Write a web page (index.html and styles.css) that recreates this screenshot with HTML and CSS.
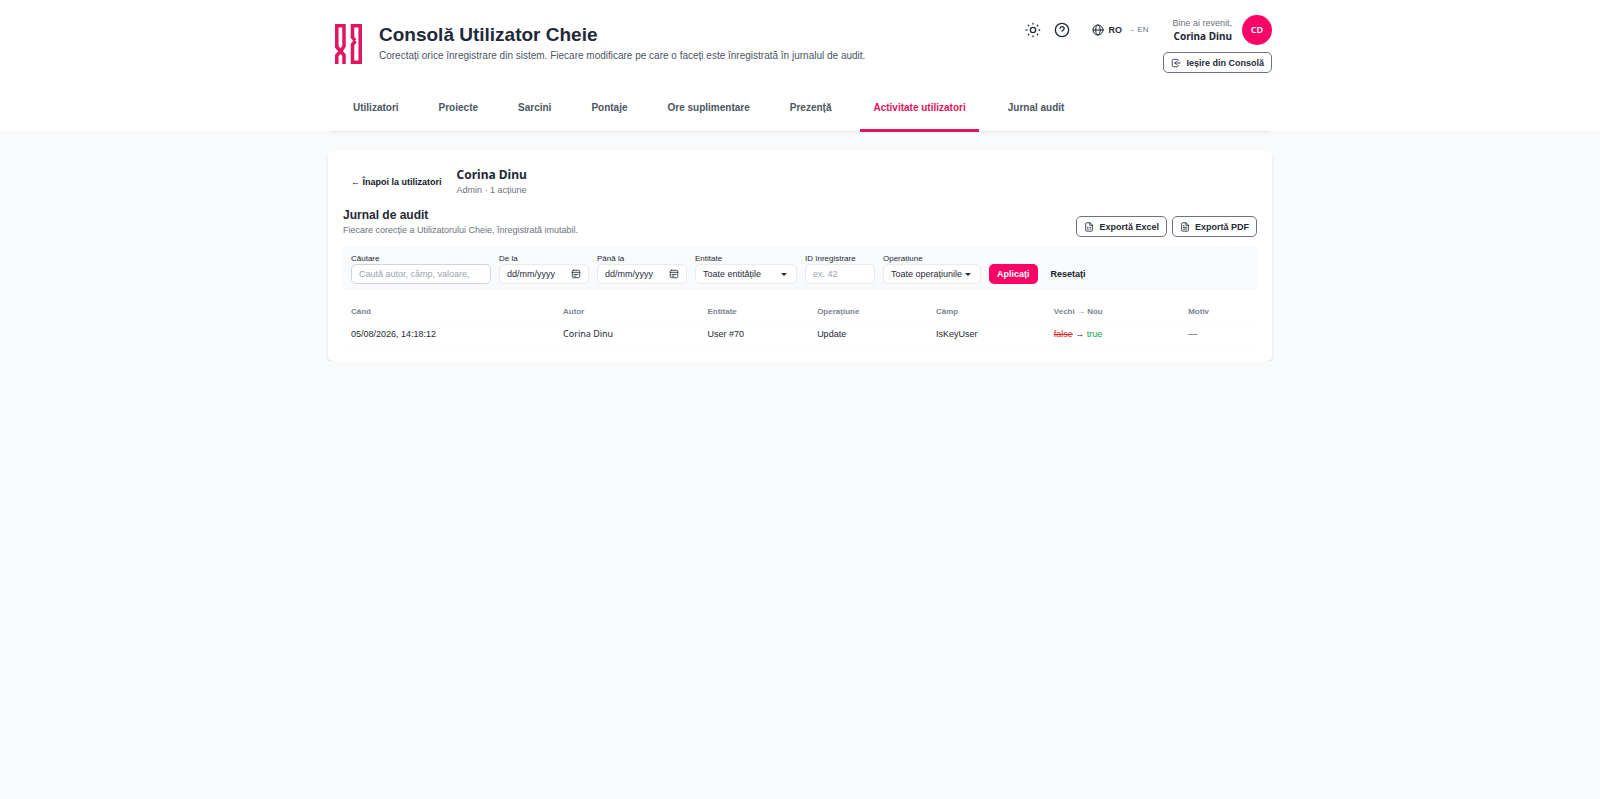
FILE: index.html
```html
<!DOCTYPE html>
<html lang="ro">
  <head>
    <meta charset="UTF-8" />
    <meta name="viewport" content="width=device-width, initial-scale=1" />
    <title>Consolă Utilizator Cheie</title>
    <link rel="stylesheet" href="styles.css">
  </head>
  <body>

  <header class="header">
    <div class="container">
      <div class="topbar">
        <svg class="logo" viewBox="0 0 27 40" aria-hidden="true">
          <path d="M9 23V1.800H1.800V23L9 31v9M9 22.500L6.500 26M4.500 28.500L1.800 31.500V40" />
          <path d="M17.500 13.500V1.800h7.700v36.400h-7.700V20.500l3-3.500M16.500 12l3.500 4.500" />
        </svg>
        <div class="heading">
          <h1>Consolă Utilizator Cheie</h1>
          <p>Corectați orice înregistrare din sistem. Fiecare modificare pe care o faceți este înregistrată în jurnalul de audit.</p>
        </div>
        <div class="tools">
          <div class="tools-row">
            <button type="button" class="icon-button" aria-label="Temă">
              <svg viewBox="0 0 24 24"><circle cx="12" cy="12" r="4" /><path d="M12 2v1M12 21v1M4.900 4.900l.7.7M18.400 18.400l.7.7M2 12h1M21 12h1M5.600 18.400l-.7.7M19.100 4.900l-.7.7" /></svg>
            </button>
            <button type="button" class="icon-button" aria-label="Ajutor">
              <svg viewBox="0 0 24 24"><circle cx="12" cy="12" r="10" /><path d="M9 9.500c.5-1.700 1.700-2.500 3.200-2.500 1.700 0 3 1.200 3 2.800 0 2-2.200 2.400-3.200 3.700" /></svg>
            </button>
            <button type="button" class="lang">
              <svg viewBox="0 0 24 24"><circle cx="12" cy="12" r="10" /><ellipse cx="12" cy="12" rx="4.500" ry="10" /><path d="M2 12h20" /></svg>
              <b>RO</b><span>→ EN</span>
            </button>
            <div class="welcome">
              <span>Bine ai revenit,</span>
              <strong>Corina Dinu</strong>
            </div>
            <div class="avatar">CD</div>
          </div>
          <button type="button" class="button">
            <svg viewBox="0 0 24 24"><path d="M17 7V6a3 3 0 0 0-3-3H6a3 3 0 0 0-3 3v12a3 3 0 0 0 3 3h8a3 3 0 0 0 3-3v-1M22 12H9M13 8l-4 4 4 4" /></svg>
            Ieșire din Consolă
          </button>
        </div>
      </div>
      <nav class="tabs">
        <a href="#utilizatori">Utilizatori</a>
        <a href="#proiecte">Proiecte</a>
        <a href="#sarcini">Sarcini</a>
        <a href="#pontaje">Pontaje</a>
        <a href="#ore">Ore suplimentare</a>
        <a href="#prezenta">Prezență</a>
        <a href="#activitate" class="active" aria-current="page">Activitate utilizatori</a>
        <a href="#jurnal">Jurnal audit</a>
      </nav>
    </div>
  </header>

  <main class="container">
    <section class="card">
      <div class="user">
        <a href="#utilizatori" class="back">← Înapoi la utilizatori</a>
        <div>
          <h2>Corina Dinu</h2>
          <p>Admin · 1 acțiune</p>
        </div>
      </div>

      <div class="section-head">
        <div>
          <h3>Jurnal de audit</h3>
          <p>Fiecare corecție a Utilizatorului Cheie, înregistrată imutabil.</p>
        </div>
        <div class="exports">
          <button type="button" class="button">
            <svg viewBox="0 0 24 24"><path d="M14 2H6a2 2 0 0 0-2 2v16a2 2 0 0 0 2 2h12a2 2 0 0 0 2-2V8zM14 2v6h6M8 13h2M14 13h2M8 17h2M14 17h2" /></svg>
            Exportă Excel
          </button>
          <button type="button" class="button">
            <svg viewBox="0 0 24 24"><path d="M14 2H6a2 2 0 0 0-2 2v16a2 2 0 0 0 2 2h12a2 2 0 0 0 2-2V8zM14 2v6h6M8 9h2M8 13h8M8 17h8" /></svg>
            Exportă PDF
          </button>
        </div>
      </div>

      <form class="filters">
        <div class="field search">
          <label for="q">Căutare</label>
          <input id="q" type="text" placeholder="Caută autor, câmp, valoare, id" />
        </div>
        <div class="field date">
          <label for="from">De la</label>
          <div class="date-box">
            <input id="from" type="text" placeholder="dd/mm/yyyy" />
            <svg viewBox="0 0 24 24"><rect x="3" y="3" width="18" height="18" rx="3" /><path d="M3 8h18M7 13h10M7 17h5" /></svg>
          </div>
        </div>
        <div class="field date">
          <label for="to">Până la</label>
          <div class="date-box">
            <input id="to" type="text" placeholder="dd/mm/yyyy" />
            <svg viewBox="0 0 24 24"><rect x="3" y="3" width="18" height="18" rx="3" /><path d="M3 8h18M7 13h10M7 17h5" /></svg>
          </div>
        </div>
        <div class="field entity">
          <label for="entity">Entitate</label>
          <select id="entity"><option>Toate entitățile</option></select>
        </div>
        <div class="field record">
          <label for="record">ID înregistrare</label>
          <input id="record" type="text" placeholder="ex. 42" />
        </div>
        <div class="field operation">
          <label for="operation">Operațiune</label>
          <select id="operation"><option>Toate operațiunile</option></select>
        </div>
        <button type="submit" class="apply">Aplicați</button>
        <button type="reset" class="reset">Resetați</button>
      </form>

      <table class="log">
        <thead>
          <tr>
            <th class="when">Când</th>
            <th class="author">Autor</th>
            <th class="kind">Entitate</th>
            <th class="action">Operațiune</th>
            <th class="name">Câmp</th>
            <th class="change">Vechi → Nou</th>
            <th class="reason">Motiv</th>
          </tr>
        </thead>
        <tbody>
          <tr>
            <td>05/08/2026, 14:18:12</td>
            <td class="person">Corina Dinu</td>
            <td>User #70</td>
            <td>Update</td>
            <td>IsKeyUser</td>
            <td><del>false</del> → <ins>true</ins></td>
            <td>—</td>
          </tr>
        </tbody>
      </table>
    </section>
  </main>

  </body>
</html>
```

FILE: styles.css
```css
:root {
  --pink: #fb0467;
  --pink-dark: #e0145f;
  --ink: #1f2937;
  --muted: #6b7280;
  --line: #e8ebef;
  --page: #f8fafc;
  --names: "Noto Sans", sans-serif;
}
* {
  box-sizing: border-box;
}
body {
  margin: 0;
  background-color: var(--page);
  color: var(--ink);
  font: 10px/14px "Liberation Sans", Arial, sans-serif;
}
h1, h2, h3, p {
  margin: 0;
}
a {
  color: inherit;
  text-decoration: none;
}
button, input, select {
  font: inherit;
  color: inherit;
}
button {
  padding: 0;
  border: 0;
  background: none;
  cursor: pointer;
}
svg {
  flex: none;
  fill: none;
  stroke: currentColor;
  stroke-width: 2;
  stroke-linecap: round;
  stroke-linejoin: round;
}
.container {
  width: 59%;
  min-width: 944px;
  margin: 0 auto;
}

/* Header */
.header {
  background-color: white;
}
.topbar {
  display: flex;
  align-items: flex-start;
  height: 84px;
  padding-top: 15px;
}
.logo {
  width: 27px;
  height: 40px;
  margin: 9px 17px 0 7px;
  color: var(--pink-dark);
  stroke-width: 3.5;
  stroke-linecap: butt;
  stroke-linejoin: miter;
}
.heading {
  flex: 1;
  padding-top: 8px;
}
.heading h1 {
  font-size: 19px;
  line-height: 24px;
}
.heading p {
  margin-top: 2px;
  color: #4b5563;
}
.tools {
  display: flex;
  flex-direction: column;
  align-items: flex-end;
  gap: 7px;
}
.tools-row {
  display: flex;
  align-items: center;
  height: 30px;
}
.icon-button {
  display: flex;
  margin-right: 13px;
}
.icon-button svg {
  width: 16px;
  height: 16px;
}
.lang {
  display: flex;
  align-items: center;
  margin: 0 24px 0 9px;
  font-size: 9px;
}
.lang svg {
  width: 12px;
  height: 12px;
  margin-right: 5px;
}
.lang span {
  margin-left: 5px;
  color: var(--muted);
  font-size: 8px;
}
.welcome {
  display: flex;
  flex-direction: column;
  align-items: flex-end;
  margin-right: 10px;
  color: var(--muted);
  font-size: 9px;
  line-height: 13px;
}
.welcome strong {
  color: var(--ink);
  font-family: var(--names);
  font-size: 10px;
}
.avatar {
  width: 30px;
  height: 30px;
  border-radius: 50%;
  background-color: var(--pink);
  color: white;
  font: 9px/30px var(--names);
  font-weight: 600;
  text-align: center;
}
.button {
  display: flex;
  align-items: center;
  gap: 5px;
  height: 21px;
  padding: 0 7px;
  border: 1px solid #6b7280;
  border-radius: 5px;
  background-color: white;
  font-size: 9px;
  font-weight: bold;
}
.button svg {
  width: 10px;
  height: 10px;
}

.tabs {
  display: flex;
  gap: 18px;
  height: 47px;
  padding: 0 14px;
  box-shadow: 0 2px 2px -1px rgba(0, 0, 0, 0.1);
}
.tabs a {
  height: 48px;
  padding: 0 11px;
  border-bottom: 3px solid transparent;
  color: #4b5563;
  font-weight: bold;
  line-height: 47px;
}
.tabs .active {
  padding: 0 13px;
  border-color: var(--pink-dark);
  color: var(--pink-dark);
}

/* Audit card */
.card {
  margin-top: 20px;
  padding: 16px 15px 15px;
  border-radius: 5px;
  background-color: white;
  box-shadow: 0 2px 3px rgba(0, 0, 0, 0.12);
}
.user {
  display: flex;
  align-items: center;
  gap: 15px;
  padding-left: 8px;
}
.back {
  color: #111827;
  font-size: 9px;
  font-weight: bold;
}
.user h2 {
  font: bold 12px/16px var(--names);
}
.user p {
  color: var(--muted);
  font-size: 9px;
}
.section-head {
  display: flex;
  align-items: center;
  justify-content: space-between;
  margin-top: 9px;
}
.section-head h3 {
  font-size: 12px;
  line-height: 16px;
}
.section-head p {
  color: var(--muted);
  font-size: 9px;
}
.exports {
  display: flex;
  gap: 5px;
  padding-top: 10px;
}

.filters {
  display: flex;
  align-items: flex-end;
  gap: 8px;
  margin-top: 9px;
  padding: 8px 8px 7px;
  border-radius: 4px;
  background-color: var(--page);
}
.field label {
  display: block;
  font-size: 8px;
  line-height: 10px;
}
.field input, .field select {
  display: block;
  width: 100%;
  height: 20px;
  padding: 0 7px;
  border: 1px solid var(--line);
  border-radius: 5px;
  background-color: white;
  font-size: 9px;
}
.field ::placeholder {
  color: #9ca3af;
}
.search {
  width: 140px;
}
.search input {
  padding-right: 18px;
  border-color: #d1d5db;
}
.date {
  width: 90px;
}
.date ::placeholder {
  color: var(--ink);
}
.date-box {
  display: grid;
  align-items: center;
}
.date-box > * {
  grid-area: 1 / 1;
}
.date-box svg {
  width: 10px;
  height: 10px;
  margin-right: 8px;
  justify-self: end;
}
.entity {
  width: 102px;
}
.record {
  width: 70px;
}
.operation {
  width: 98px;
}
.field select {
  appearance: none;
  background: white url("data:image/svg+xml,%3Csvg xmlns='http://www.w3.org/2000/svg' viewBox='0 0 6 3'%3E%3Cpath d='M0 0h6L3 3z' fill='%231f2937'/%3E%3C/svg%3E") no-repeat right 9px center / 6px 3px;
}
.apply {
  height: 20px;
  padding: 0 8px;
  border-radius: 5px;
  background-color: var(--pink);
  color: white;
  font-size: 9px;
  font-weight: bold;
}
.reset {
  height: 20px;
  margin-left: 5px;
  color: #111827;
  font-size: 9px;
  font-weight: bold;
}

.log {
  width: 100%;
  margin-top: 10px;
  border-collapse: collapse;
  table-layout: fixed;
}
.log th, .log td {
  padding: 0 8px;
  border-bottom: 1px solid #fafbfc;
  text-align: left;
}
.log th {
  height: 22px;
  color: #7b8491;
  font-size: 8px;
}
.log td {
  height: 22px;
  font-size: 9px;
}
.log .person {
  font-family: var(--names);
}
.log del {
  color: #dc2626;
}
.log ins {
  color: #16a34a;
  text-decoration: none;
}
.when { width: 23.2%; }
.author { width: 15.8%; }
.kind { width: 12%; }
.action { width: 13%; }
.name { width: 12.9%; }
.change { width: 14.7%; }
```
